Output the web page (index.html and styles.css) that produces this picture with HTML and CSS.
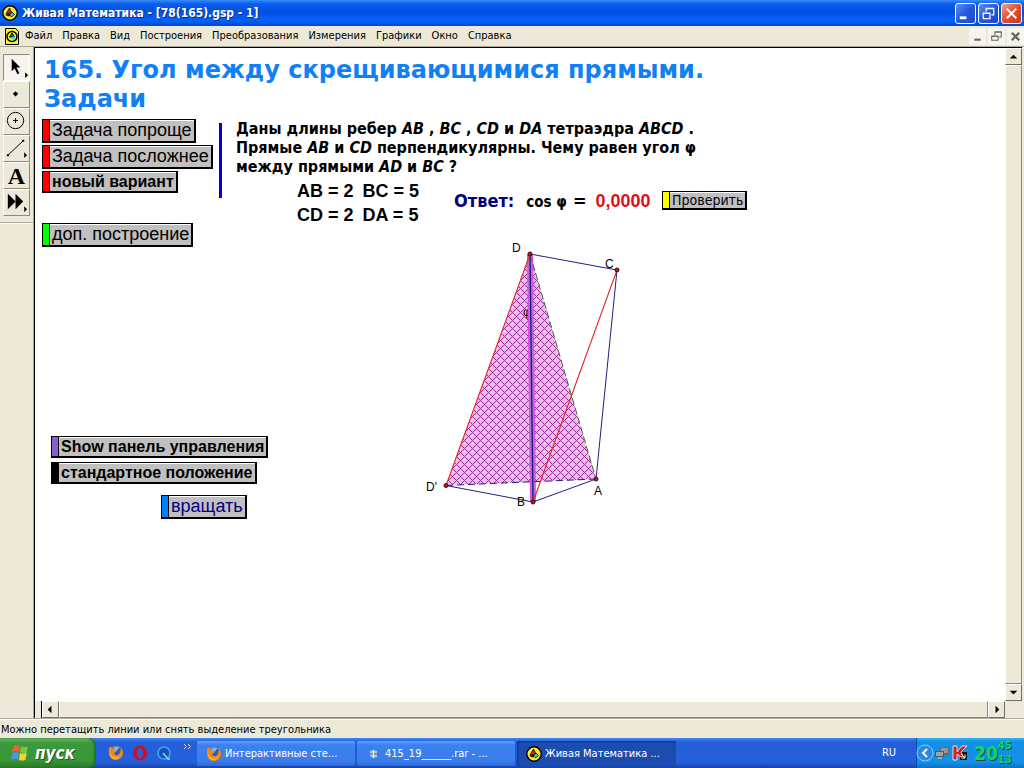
FILE: index.html
```html
<!DOCTYPE html>
<html lang="ru">
<head>
<meta charset="utf-8">
<title>Живая Математика - [78(165).gsp - 1]</title>
<link rel="stylesheet" href="styles.css">
</head>
<body>
<svg class="defs" aria-hidden="true">
  <symbol id="logo" viewBox="0 0 16 16">
    <circle cx="8" cy="8" r="7.2" fill="#ffee22" stroke="#000" stroke-width="1.4"/>
    <path d="M7.500 3 10.500 9H4z" fill="#e01818" stroke="#000" stroke-width=".8"/>
    <path d="M3 10l4-1.500L9 10l-2 1.500z" fill="#111"/>
    <path d="m10 7 2.500 2.500L9.500 12 7.500 10z" fill="#30d8d8" stroke="#000" stroke-width=".8"/>
  </symbol>
  <symbol id="fox" viewBox="0 0 16 16">
    <circle cx="8" cy="8" r="7" fill="#e87810"/>
    <circle cx="8.500" cy="6" r="4.800" fill="#2860b8"/>
    <path d="M5 3c2-2 5-2 7 0-2 0-3 1-2 2L7 6z" fill="#80b8e8"/>
    <path d="M1 4 2 1l3 3 4 2-3 2c1 3 4 3 6 0l1-5c4 5 0 12-5 12S0 11 1 4z" fill="#f08a18"/>
    <path d="M2 6c0 5 4 8 10 6-4 4-11 1-10-6z" fill="#ffd040"/>
  </symbol>
</svg>

<header class="titlebar">
  <svg class="icon16"><use href="#logo"/></svg>
  <h1 class="title">Живая Математика - [78(165).gsp - 1]</h1>
  <button class="win" aria-label="Свернуть"><svg viewBox="0 0 20 20"><path d="M4 13h7v3H4z" fill="#fff"/></svg></button>
  <button class="win" aria-label="Восстановить"><svg viewBox="0 0 20 20"><path d="M7.500 8V4.500h8v7H13M7 5h9M4.500 9.500h7v6h-7zM4 10h8" fill="none" stroke="#fff" stroke-width="1.300"/></svg></button>
  <button class="win win-close" aria-label="Закрыть"><svg viewBox="0 0 20 20"><path d="m5 5 10 10M15 5 5 15" stroke="#fff" stroke-width="2.200"/></svg></button>
</header>

<nav class="menubar">
  <svg class="doc-icon" viewBox="0 0 14 17"><path d="M.5.500h10l3 3v13H.5z" fill="#f8f020" stroke="#000"/><circle cx="7" cy="8.500" r="5" fill="#f8f020" stroke="#000" stroke-width="1.500"/><path d="M7 5 9.500 9h-5z" fill="#207020" stroke="#000"/><circle cx="8.500" cy="10" r="1.700" fill="#30d8d8"/></svg>
  <a href="#">Файл</a><a href="#">Правка</a><a href="#">Вид</a><a href="#">Построения</a><a href="#">Преобразования</a><a href="#">Измерения</a><a href="#">Графики</a><a href="#">Окно</a><a href="#">Справка</a>
  <div class="mdi">
    <button aria-label="Свернуть документ"><svg viewBox="0 0 16 16"><path d="M5 11h6" stroke="#69675c" stroke-width="2"/></svg></button>
    <button aria-label="Восстановить документ"><svg viewBox="0 0 16 16"><path d="M6.500 6.500v-3h6v5h-2M6 4h7M3.500 7.500h6v4h-6zM3 8h7" fill="none" stroke="#69675c"/></svg></button>
    <button aria-label="Закрыть документ"><svg viewBox="0 0 16 16"><path d="m4.500 4.500 7 7M11.500 4.500l-7 7" stroke="#69675c" stroke-width="2.200"/></svg></button>
  </div>
</nav>

<main class="workspace">
  <aside class="side">
    <div class="tools">
      <button class="tool tool-on" aria-label="Стрелка"><svg viewBox="0 0 26 26"><path d="M8 4v13l3-3 3 6 2-1-3-6h4zM22 18v6l3-3z"/></svg></button>
      <button class="tool" aria-label="Точка"><svg viewBox="0 0 26 26"><path d="m12 9.500 2.800 2.800-2.800 2.800-2.800-2.800z"/></svg></button>
      <button class="tool" aria-label="Окружность"><svg viewBox="0 0 26 26"><circle cx="12" cy="12" r="8.500" fill="none" stroke="#000"/><path d="M9.500 12h5M12 9.500v5" stroke="#000"/></svg></button>
      <button class="tool" aria-label="Отрезок"><svg viewBox="0 0 26 26"><path d="M4 20 20 5" stroke="#000"/><path d="M3 19h2v2H3zM19 4h2v2h-2zM21 17v6l3-3z"/></svg></button>
      <button class="tool tool-text" aria-label="Текст">A</button>
      <button class="tool" aria-label="Инструменты"><svg viewBox="0 0 26 26"><path d="M4 4v16l8-8zM12 4v16l8-8zM21 17v6l3-3z"/></svg></button>
    </div>
  </aside>

  <section class="document">
    <div class="view">
      <article class="sketch">
        <h2 class="heading">165. Угол между скрещивающимися прямыми.<br>Задачи</h2>
        <div class="board">
          <div class="actions">
            <button class="act red">Задача попроще</button>
            <button class="act red">Задача посложнее</button>
            <button class="act red bold">новый вариант</button>
            <button class="act green extra">доп. построение</button>
            <button class="act violet bold panel">Show панель управления</button>
            <button class="act black bold inset">стандартное положение</button>
            <button class="act blue spin">вращать</button>
          </div>
          <div class="rule"></div>
          <div class="problem">
            <p class="statement">Даны длины ребер <i>AB</i> , <i>BC</i> , <i>CD</i> и <i>DA</i> тетраэдра <i>ABCD</i> .<br>Прямые <i>AB</i> и <i>CD</i> перпендикулярны. Чему равен угол φ<br>между прямыми <i>AD</i> и <i>BC</i> ?</p>
            <div class="given">
              <div class="values"><span>AB = 2</span><span>BC = 5</span><span>CD = 2</span><span>DA = 5</span></div>
              <div class="answer"><span class="label">Ответ:</span><span class="cos">cos φ</span><span class="eq">=</span><output class="result">0,0000</output></div>
              <button class="act yellow check">Проверить</button>
            </div>
            <svg class="figure" viewBox="420 238 220 275" role="img" aria-label="Тетраэдр ABCD">
              <defs><pattern id="net" width="8" height="8" patternUnits="userSpaceOnUse"><path d="M0 0h8v8H0z" fill="#e4c6e2"/><path d="M0 0h1v1H0zM1 1h1v1H1zM2 2h1v1H2zM3 3h1v1H3zM4 4h1v1H4zM5 5h1v1H5zM6 6h1v1H6zM7 7h1v1H7zM7 1h1v1H7zM6 2h1v1H6zM5 3h1v1H5zM3 5h1v1H3zM2 6h1v1H2zM1 7h1v1H1z" fill="#a91ca9"/></pattern></defs>
              <path d="M530 254 446 485.500 596 479z" fill="url(#net)"/>
              <text x="523" y="316">φ</text>
              <path d="M530 254 533 502" stroke="#e048f0" stroke-width="6"/>
              <path d="M530 254 533 502" stroke="#b070d0" stroke-width="4"/>
              <path d="M530 254 533 502" stroke="#181878" stroke-width="1.300"/>
              <path d="m530 254 87 16-21 209-63 23-87-16.500" fill="none" stroke="#20207c"/>
              <path d="m446 485.500 150-6.500" stroke="#20207c" stroke-dasharray="7 4"/>
              <path d="m530 254 66 225" stroke="#307830" stroke-dasharray="7 3"/>
              <path d="m530 254-84 231.500M617 270l-84 232" stroke="#e02828" stroke-width="1.100"/>
              <g fill="#b81820" stroke="#400810"><circle cx="530" cy="254" r="2"/><circle cx="617" cy="270" r="2"/><circle cx="596" cy="479" r="2"/><circle cx="533" cy="502" r="2"/><circle cx="446" cy="485.500" r="2"/></g>
              <text x="512" y="252">D</text><text x="605" y="268">C</text><text x="594" y="495">A</text><text x="517" y="506">B</text><text x="426" y="491">D'</text>
            </svg>
          </div>
        </div>
      </article>
      <div class="vscroll">
        <button class="arrow" aria-label="Вверх"><svg viewBox="0 0 16 16"><path d="m4 10 4-4 4 4z"/></svg></button>
        <div class="thumb"></div>
        <button class="arrow" aria-label="Вниз"><svg viewBox="0 0 16 16"><path d="m4 6 4 4 4-4z"/></svg></button>
      </div>
    </div>
    <div class="hscroll">
      <div class="split"></div>
      <button class="arrow" aria-label="Влево"><svg viewBox="0 0 16 16"><path d="m9 4-4 4 4 4z"/></svg></button>
      <div class="thumb"></div>
      <button class="arrow" aria-label="Вправо"><svg viewBox="0 0 16 16"><path d="m7 4 4 4-4 4z"/></svg></button>
    </div>
  </section>
</main>

<div class="status">Можно перетащить линии или снять выделение треугольника</div>

<footer class="taskbar">
  <button class="start"><svg viewBox="0 0 18 18"><path d="M3 3c2-2 4-1 6 0L8 8C6 7 4 7 2 8z" fill="#f06030"/><path d="M10 3c2 1 4 1 6 0l-1 6c-2 1-4 0-6-1z" fill="#78c840"/><path d="M2 9c2-1 4-1 6 0l-1 6c-2-1-4-1-6 0z" fill="#5090f0"/><path d="M9 9c2 1 4 1 6 0l-1 6c-2 1-4 1-6 0z" fill="#f8d030"/></svg>пуск</button>
  <div class="quick">
    <svg class="icon16"><use href="#fox"/></svg>
    <svg class="icon16" viewBox="0 0 16 16"><ellipse cx="8" cy="8" rx="7" ry="7.500" fill="#d01020"/><ellipse cx="8" cy="8" rx="2.800" ry="5.500" fill="#2460d8"/></svg>
    <svg class="icon16" viewBox="0 0 16 16"><circle cx="8" cy="8" r="6" fill="#1850b8" stroke="#40a0f0" stroke-width="1.700"/><path d="m7 8 5 6h2" fill="none" stroke="#70c8ff" stroke-width="1.800"/></svg>
    <svg class="more" viewBox="0 0 8 6"><path d="m1 0 2.500 2.500L1 5M5 0l2.500 2.500L5 5" fill="none" stroke="#c8e0ff"/></svg>
  </div>
  <div class="tasks">
    <button class="task"><svg class="icon16"><use href="#fox"/></svg>Интерактивные сте...</button>
    <button class="task"><svg class="icon16" viewBox="0 0 16 16"><path d="m4 5 3-1 4 1v6l-4 1-3-2z" fill="#90d8e0"/><path d="M3 8h9" stroke="#c06068" stroke-width="1.500"/><path d="M7.500 4v8" stroke="#fff"/></svg>415_19______.rar - ...</button>
    <button class="task task-on"><svg class="icon16"><use href="#logo"/></svg>Живая Математика ...</button>
  </div>
  <span class="lang">RU</span>
  <div class="tray">
    <button class="chevron" aria-label="Показать значки"><svg viewBox="0 0 18 18"><circle cx="9" cy="9" r="8" fill="#2888e8" stroke="#90ccf8"/><path d="m11 5-4 4 4 4" fill="none" stroke="#fff" stroke-width="2"/></svg></button>
    <svg class="icon16" viewBox="0 0 16 16"><path d="M6 2h9v8H6z" fill="#606870"/><path d="M7 3h7v5H7z" fill="#90989c"/><path d="M1 6h9v6H1z" fill="#505860"/><path d="M2 7h7v4H2zM4 12h4v2H3z" fill="#a0a4a8"/></svg>
    <svg class="icon16" viewBox="0 0 16 16"><path d="M8 7h7v8H8z" fill="#111"/><path d="M1 1h4v6l5-6h5L9 7l2 4-2 1-4-3v6H1z" fill="#e01818" stroke="#fff" stroke-width=".8"/><path d="m9 9 4 4M13 9.500V13H9.500" fill="none" stroke="#fff"/></svg>
    <time class="clock"><span class="hour">20</span><span class="minute"><span>45</span><span>13</span></span></time>
  </div>
</footer>
</body>
</html>
```
FILE: styles.css
```css
* { box-sizing: border-box; }
body {
  margin: 0;
  min-height: 100vh;
  display: flex;
  flex-direction: column;
  background: #ece9d8;
  color: #000;
  font: 11px/14px "DejaVu Sans Condensed", "DejaVu Sans", sans-serif;
}
button { margin: 0; padding: 0; border: 0; background: none; color: inherit; font: inherit; }
svg { display: block; flex: none; }
.defs { width: 0; height: 0; position: absolute; }
.icon16 { width: 16px; height: 16px; }

.titlebar {
  display: flex;
  align-items: center;
  gap: 2px;
  height: 26px;
  padding: 0 2px;
  background: linear-gradient(#3a8cf8, #0a5cec 4px, #0050e0 12px, #0562fa 20px, #0048d0);
  color: #fff;
}
.title { flex: 1; margin: 0 0 0 2px; font: bold 12px/16px "DejaVu Sans Condensed", sans-serif; text-shadow: 1px 1px #102878; }
.win { width: 21px; height: 21px; border: 1px solid #fff; border-radius: 3px; background: linear-gradient(135deg, #6090f0, #2458dc 50%, #1c48c8); }
.win-close { background: linear-gradient(135deg, #f0a088, #e05030 50%, #c03818); }

.menubar { display: flex; align-items: center; gap: 10px; height: 20px; padding-left: 5px; }
.menubar a { color: #000; text-decoration: none; }
.doc-icon { width: 14px; height: 17px; margin-right: -4px; }
.mdi { display: flex; gap: 2px; margin-left: auto; }
.mdi button { width: 17px; height: 17px; background: #f5f4ee; }

.workspace { flex: 1; display: flex; border-top: 1px solid #aca899; }
.side { width: 34px; border-right: 1px solid #aca899; }
.tools { padding: 7px 3px 6px; border-bottom: 1px solid #aca899; box-shadow: 0 1px #fff; }
.tool {
  display: block;
  width: 27px;
  height: 27px;
  border: 1px solid;
  border-color: #fff #8c8a7c #8c8a7c #fff;
}
.tool svg { width: 25px; height: 25px; }
.tool-on { background: #f5f4ee; border-color: #8c8a7c #fff #fff #8c8a7c; }
.tool-text { font: bold 24px/24px "Liberation Serif", serif; }

.document { flex: 1; display: flex; flex-direction: column; min-width: 0; margin-right: 2px; border: solid #000; border-width: 1px 0 0 1px; }
.view { flex: 1; display: flex; background: #fff; }
.sketch { flex: 1; min-width: 0; padding: 8px 7px; }
.heading { margin: 0 0 5px 2px; color: #0f80f5; font: bold 24px/29px "DejaVu Sans", sans-serif; }
.board { display: flex; align-items: flex-start; }
.actions { display: flex; flex-direction: column; align-items: flex-start; gap: 2px; width: 177px; }
.act {
  padding: 0 2px 0 1px;
  border: 1px solid #000;
  border-width: 1px 2px 2px 1px;
  background: #c0c0c0;
  box-shadow: inset 1px 1px #fff;
  font: 18px/21px "Liberation Sans", sans-serif;
  white-space: nowrap;
}
.act::before { content: ""; display: inline-block; width: 6px; height: 21px; margin: 0 2px 0 -1px; border-right: 1px solid #000; background: var(--mark); vertical-align: top; }
.bold { font: bold 16px/19px "Liberation Sans", sans-serif; }
.bold::before { height: 19px; }
.red { --mark: #f00; }
.green { --mark: #0f0; }
.violet { --mark: #8a60d0; }
.black { --mark: #000; }
.blue { --mark: #0080ff; color: #000080; }
.yellow { --mark: #ff0; }
.extra { margin-top: 28px; }
.panel { margin: 187px 0 2px 9px; }
.inset { margin-left: 9px; }
.spin { margin: 9px 0 0 119px; }
.rule { width: 3px; height: 75px; margin-top: 4px; background: #0000d0; }
.problem { margin-left: 14px; }
.statement { margin: 0; font: bold 16px/19px "DejaVu Sans Condensed", sans-serif; white-space: nowrap; }
.given { display: flex; align-items: flex-start; padding: 3px 0 0 61px; }
.values { display: grid; grid-template-columns: auto auto; column-gap: 9px; font: bold 18px/24px "Liberation Sans", sans-serif; }
.answer { display: flex; align-items: baseline; width: 208px; margin: 12px 0 0 35px; font: bold 18px/20px "DejaVu Sans Condensed", sans-serif; }
.label { color: #000080; }
.cos { margin-left: 12px; font-size: 15px; }
.eq { margin-left: 6px; }
.result { margin-left: 9px; color: #e01018; font: bold 18px/20px "Liberation Sans", sans-serif; }
.check { margin-top: 12px; font: 14px/16px "DejaVu Sans Condensed", sans-serif; }
.check::before { height: 16px; }
.figure { width: 220px; height: 275px; margin: 11px 0 0 184px; font: 12px "Liberation Sans", sans-serif; }

.vscroll { display: flex; flex-direction: column; width: 17px; }
.hscroll { display: flex; height: 17px; padding-right: 17px; }
.arrow { width: 17px; height: 17px; background: #ece9d8; border: 1px solid; border-color: #fff #716f64 #716f64 #fff; }
.thumb { flex: 1; background: #ece9d8; border: 1px solid; border-color: #fff #8c8a7c #8c8a7c #fff; }
.split { width: 7px; border-right: 1px solid #000; }

.status { height: 20px; padding: 4px 1px; border-top: 1px solid #aca899; box-shadow: inset 0 1px #fff; }

.taskbar { display: flex; height: 30px; background: linear-gradient(#3c88f0, #245edb 4px, #2560dc 24px, #1941a5); color: #fff; }
.start {
  display: flex;
  align-items: center;
  gap: 5px;
  width: 96px;
  padding-left: 10px;
  border-radius: 0 8px 8px 0;
  background: linear-gradient(#68b868, #3c983c 5px, #389838 22px, #287828);
  box-shadow: inset -2px 0 2px #207020;
  font: italic bold 17px/20px "DejaVu Sans Condensed", sans-serif;
  text-shadow: 1px 1px 1px #205020;
}
.start svg { width: 20px; height: 20px; }
.quick { display: flex; align-items: center; gap: 8px; width: 101px; padding-left: 12px; }
.more { width: 8px; height: 6px; margin: 0 0 12px 3px; }
.tasks { flex: 1; display: flex; gap: 1px; padding: 3px 0 2px; }
.task { display: flex; align-items: center; gap: 3px; flex: 0 1 159px; padding-left: 9px; border-radius: 2px; background: linear-gradient(#60a0ff, #3c81f0 4px, #3a7cec 20px, #2c68d8); box-shadow: inset -1px 0 #2458c0; white-space: nowrap; }
.task-on { background: #1c4cb0; box-shadow: inset 1px 1px 2px #103080; }
.lang { padding: 8px 20px 0 0; }
.tray { display: flex; align-items: center; gap: 2px; width: 108px; background: linear-gradient(#30b0f8, #1290e8 4px, #1390ea 24px, #0c70c0); box-shadow: inset 1px 0 #0c50a0; }
.chevron { width: 18px; height: 18px; margin-right: -2px; }
.clock { display: flex; align-items: center; margin-left: 4px; color: #10d860; font: bold 19px/24px "DejaVu Sans Condensed", sans-serif; text-shadow: 1px 1px #064850; }
.minute { display: flex; flex-direction: column; font-size: 11px; line-height: 14px; }
```
